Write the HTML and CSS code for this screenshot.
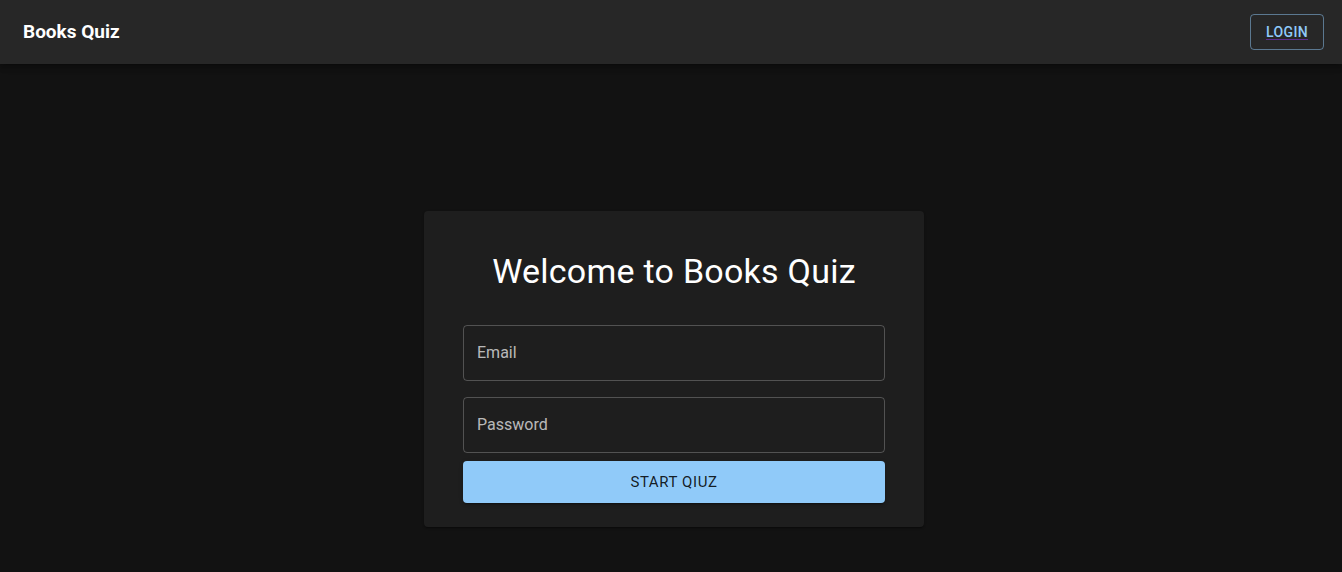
FILE: index.html
```html
<!DOCTYPE html>
<html lang="en">
<head>
<meta charset="utf-8">
<title>Books Quiz</title>
<link rel="stylesheet" href="styles.css">
</head>
<body>
<header class="appbar">
  <div class="brand">Books Quiz</div>
  <span class="login-btn"><a class="login-link" href="#login">Login</a></span>
</header>
<main class="main">
  <section class="card">
    <h1 class="card-title">Welcome to Books Quiz</h1>
    <form class="form">
      <label class="field"><input class="field-input" type="email" placeholder="Email"></label>
      <label class="field"><input class="field-input" type="password" placeholder="Password"></label>
      <button class="submit" type="button">Start Qiuz</button>
    </form>
  </section>
</main>
</body>
</html>
```
FILE: styles.css
```css
* { box-sizing: border-box; }
html, body { margin: 0; padding: 0; }
body {
  background: #121212;
  color: #fff;
  font-family: Roboto, "Noto Sans", Arial, sans-serif;
  min-height: 572px;
}
.appbar {
  height: 64px;
  background: #272727;
  display: flex;
  align-items: center;
  justify-content: space-between;
  padding: 0 18px 0 23px;
  box-shadow: 0 2px 4px -1px rgba(0,0,0,0.2), 0 4px 5px 0 rgba(0,0,0,0.14), 0 1px 10px 0 rgba(0,0,0,0.12);
  position: relative;
  z-index: 1;
}
.brand {
  font-size: 19px;
  font-weight: 700;
  line-height: 1.6;
  color: #fff;
}
.login-btn {
  display: inline-flex;
  align-items: center;
  justify-content: center;
  height: 36px;
  width: 74px;
  border: 1px solid rgba(144,202,249,0.5);
  border-radius: 4px;
  font-size: 14px;
  font-weight: 500;
  letter-spacing: 0.02857em;
  text-transform: uppercase;
  margin-top: -1px;
}
.login-link {
  color: #90caf9;
  text-decoration: underline;
  text-decoration-color: #5b2d8e;
  text-underline-offset: 2px;
}
.main {
  display: flex;
  justify-content: center;
  padding-top: 147px;
  padding-left: 6px;
}
.card {
  width: 500px;
  background: #1e1e1e;
  border-radius: 4px;
  padding: 40px 39px 24px;
  box-shadow: 0 2px 1px -1px rgba(0,0,0,0.2), 0 1px 1px 0 rgba(0,0,0,0.14), 0 1px 3px 0 rgba(0,0,0,0.12);
}
.card-title {
  margin: 0 0 16px;
  font-size: 34px;
  font-weight: 400;
  line-height: 1.235;
  letter-spacing: 0.00735em;
  text-align: center;
  color: #fff;
}
.form {
  display: flex;
  flex-direction: column;
}
.field {
  display: block;
  margin: 16px 0 8px;
}
.field + .field { margin-top: 8px; }
.field-input {
  display: block;
  width: 100%;
  height: 56px;
  background: transparent;
  border: 1px solid rgba(255,255,255,0.23);
  border-radius: 4px;
  padding: 0 13px;
  font-family: inherit;
  font-size: 16px;
  color: #fff;
  outline: none;
}
.field-input::placeholder {
  color: rgba(255,255,255,0.7);
  opacity: 1;
}
.submit {
  height: 42px;
  width: 100%;
  margin-top: 0;
  border: none;
  border-radius: 4px;
  background: #90caf9;
  color: rgba(0,0,0,0.87);
  font-family: inherit;
  font-size: 15px;
  font-weight: 400;
  letter-spacing: 0.04em;
  text-transform: uppercase;
  box-shadow: 0 3px 1px -2px rgba(0,0,0,0.2), 0 2px 2px 0 rgba(0,0,0,0.14), 0 1px 5px 0 rgba(0,0,0,0.12);
  cursor: pointer;
}
```
